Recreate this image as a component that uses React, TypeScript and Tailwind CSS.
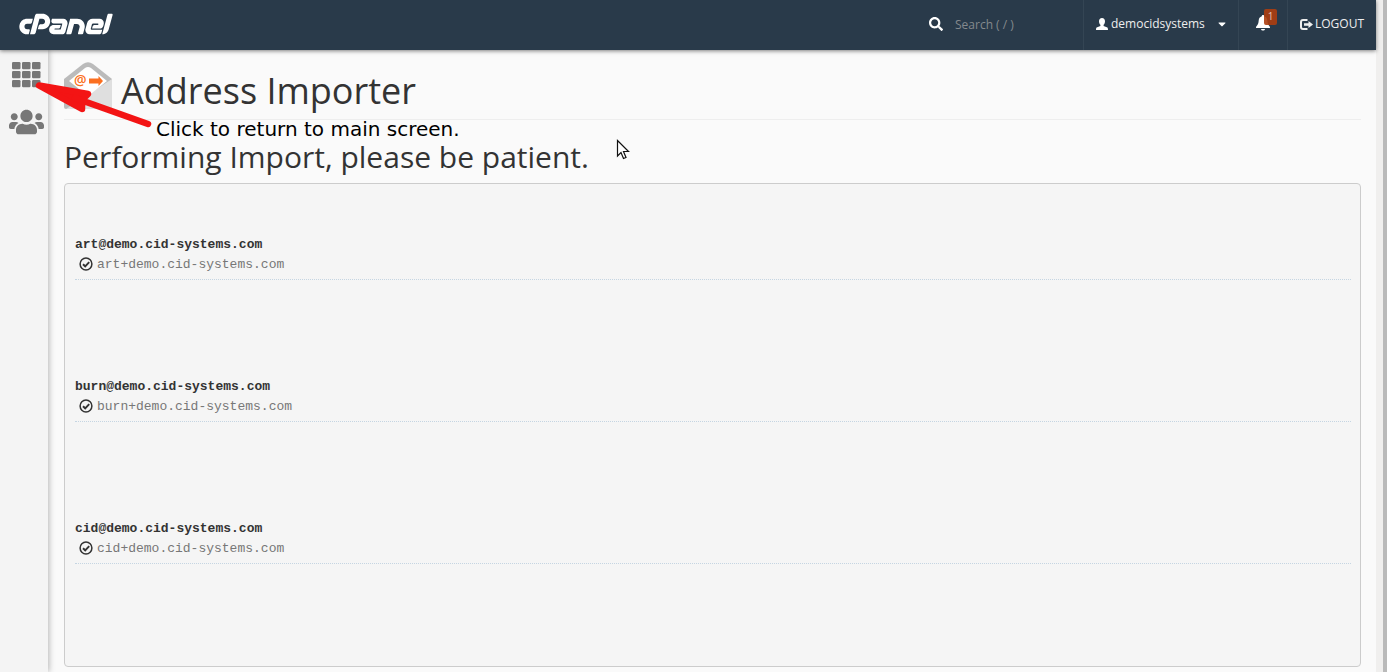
import React from "react";
import { FaCpanel, FaSearch, FaUsers, FaCaretDown } from "react-icons/fa";

const accounts = ["art", "burn", "cid"];
const domain = "demo.cid-systems.com";

function PersonIcon() {
  return (
    <svg viewBox="0 0 12 12" className="h-3 w-3" fill="currentColor" aria-hidden="true">
      <path d="M6 0C4.100 0 3 1.300 3 3.200c0 1.500.5 2.800 1.400 3.600v1.100L1.200 9.200C.3 9.600 0 10.200 0 12h12c0-1.800-.3-2.400-1.200-2.800L7.600 7.900V6.800C8.500 6 9 4.700 9 3.200 9 1.300 7.900 0 6 0Z" />
    </svg>
  );
}

function BellIcon() {
  return (
    <svg viewBox="0 0 14 16" className="h-4 w-3.5" fill="currentColor" aria-hidden="true">
      <path d="M7 0c-.8 0-1.200.5-1.200 1.300C3.700 1.900 2.900 3.600 2.700 5.500 2.500 8.200 2 9.800.5 11.200c-.4.4-.5.700-.5 1.800h14c0-1.100-.1-1.400-.5-1.800C12 9.800 11.500 8.200 11.300 5.500 11.100 3.600 10.300 1.900 8.200 1.300 8.200.5 7.800 0 7 0Z" />
      <path d="M5 14h4c-.2 1-.9 1.600-2 1.600S5.200 15 5 14Z" />
    </svg>
  );
}

function LogoutIcon() {
  return (
    <svg viewBox="0 0 13 11" className="h-[11px] w-[13px]" aria-hidden="true">
      <path d="M7.500 1H3Q1 1 1 3V8Q1 10 3 10H7.500" fill="none" stroke="currentColor" strokeWidth="2" />
      <path d="M4 4.200h4.500V2L13 5.500 8.500 9V6.800H4Z" fill="currentColor" />
    </svg>
  );
}

function CheckIcon() {
  return (
    <svg viewBox="0 0 14 14" className="mb-0.5 h-3.5 w-3.5 text-[#333333]" fill="none" stroke="currentColor" aria-hidden="true">
      <circle cx="7" cy="7" r="5.900" strokeWidth="1.500" />
      <path d="M4 7.200 6.200 9.300 10.200 5.100" strokeWidth="1.900" />
    </svg>
  );
}

function GridIcon() {
  const steps = [0, 10, 20];
  return (
    <svg viewBox="0 0 29 26" className="h-[26px] w-[29px]" fill="currentColor" aria-hidden="true">
      {steps.map((x) =>
        [0, 9, 18].map((y) => <rect key={`${x}-${y}`} x={x} y={y} width="8.500" height="7.300" rx="1.200" />)
      )}
    </svg>
  );
}

function EnvelopeIcon() {
  return (
    <svg viewBox="0 0 48 48" className="h-12 w-12 shrink-0" aria-hidden="true">
      <path d="M0 17 19 2Q24-1.500 29 2L48 17V47H2Q0 47 0 45Z" fill="#bbb" />
      <path d="M48 17V45Q48 47 46 47H2Z" fill="#dfdfdf" />
      <path d="M5 19 21 6Q24 4 27 6L43 19 28 31Q24 34 20 31Z" fill="#fff" />
      <text x="10" y="23" fontSize="14" fontWeight="600" fill="#fb6f20" fontFamily="Open Sans, sans-serif">@</text>
      <path d="M25 16.500h9.500V14L39 19 34.500 24V21.500H25Z" fill="#fb6f20" />
    </svg>
  );
}

function Header() {
  return (
    <header className="relative z-20 flex h-[50px] items-stretch bg-[#293a4a] text-xs text-white shadow-[0_1px_4px_rgba(0,0,0,0.5)]">
      <a href="#home" aria-label="cPanel" className="flex items-center pl-[19px]">
        <FaCpanel viewBox="0 160 640 192" className="h-7 w-[94px]" />
      </a>
      <label className="ml-auto flex w-[154px] items-center gap-3">
        <FaSearch className="mb-0.5 h-3.5 w-3.5 shrink-0" />
        <input
          type="search"
          aria-label="Search"
          placeholder="Search ( / )"
          className="w-28 bg-transparent outline-none placeholder:text-[#84898d]"
        />
      </label>
      <button type="button" className="flex w-[155px] items-center gap-[3px] border-l border-[#344554] pb-0.5 pl-3">
        <PersonIcon />
        <span className="text-[#eeeeee]">democidsystems</span>
        <FaCaretDown className="ml-2 h-3 w-3" />
      </button>
      <button type="button" aria-label="Notifications" className="flex w-[49px] items-center justify-center border-l border-[#344554] pb-1">
        <span className="relative">
          <BellIcon />
          <span className="absolute -top-1.5 left-2 flex h-4 w-[13px] items-center justify-center rounded-xs bg-[#ad3e0f]/90 text-[10px] text-[#e5c5b7]">
            1
          </span>
        </span>
      </button>
      <a href="#logout" className="flex w-[89px] items-center gap-0.5 border-l border-[#344554] pb-0.5 pl-3 text-[#eeeeee]">
        <LogoutIcon />
        LOGOUT
      </a>
    </header>
  );
}

function Annotation() {
  return (
    <>
      <svg viewBox="0 0 120 50" className="pointer-events-none absolute left-[35px] top-[80px] z-30 h-[50px] w-[120px]" aria-hidden="true">
        <path
          d="M4 5.500 53 14 47 20 47 29Z M40 18 113 44"
          fill="#f31414"
          stroke="#f31414"
          strokeWidth="6.500"
          strokeLinecap="round"
          strokeLinejoin="round"
        />
      </svg>
      <p className="absolute left-[156px] top-[117px] z-30 whitespace-nowrap font-['DejaVu_Sans',sans-serif] text-[20px] leading-6 text-black">
        Click to return to main screen.
      </p>
      <svg viewBox="0 0 14 21" className="pointer-events-none absolute left-[616px] top-[139px] z-30 h-[21px] w-3.5" aria-hidden="true">
        <path d="M1.500 1.500V17L5 13.500 7.500 19.500 10 18.500 7.500 12.500H12.500Z" fill="#fff" stroke="#111" strokeWidth="1.200" />
      </svg>
    </>
  );
}

export default function App() {
  return (
    <div className="relative flex min-h-screen font-['Open_Sans',sans-serif] text-[#333333]">
      <div className="flex min-w-0 flex-1 flex-col bg-[#fafafa]">
        <Header />
        <div className="flex flex-1">
          <nav className="z-10 flex w-12 shrink-0 flex-col items-center gap-5 bg-[#f4f4f4] pl-[5px] pt-3 text-[#777777] shadow-[1px_0_6px_rgba(0,0,0,0.28)]">
            <a href="#main" aria-label="Main screen">
              <GridIcon />
            </a>
            <a href="#users" aria-label="User manager">
              <FaUsers className="h-7 w-[35px]" />
            </a>
          </nav>
          <main className="min-w-0 flex-1 px-[15px] pb-[5px] pl-4 pt-3">
            <div className="flex h-[58px] items-start gap-[9px] border-b border-[#eeeeee]">
              <EnvelopeIcon />
              <h1 className="pt-1 text-[36px] leading-[50px]">Address Importer</h1>
            </div>
            <h2 className="mb-2 mt-[18px] text-[30px] leading-[37px]">Performing Import, please be patient.</h2>
            <section className="h-[484px] rounded border border-[#cccccc] bg-[#f5f5f5] pl-2.5 pr-[9px] pt-[51px] font-['Liberation_Mono',monospace] text-[13px] leading-5">
              {accounts.map((name) => (
                <article key={name} className="mb-[97px] border-b border-dotted border-[#c5d5e2] pb-1">
                  <h3 className="font-bold">{`${name}@${domain}`}</h3>
                  <p className="flex items-center gap-1 pl-1 text-[#777777]">
                    <CheckIcon />
                    {`${name}+${domain}`}
                  </p>
                </article>
              ))}
            </section>
          </main>
        </div>
      </div>
      <div className="w-[7px] shrink-0 bg-[#f0efee]" />
      <div className="w-1 shrink-0 bg-[#bababa]" />
      <Annotation />
    </div>
  );
}
